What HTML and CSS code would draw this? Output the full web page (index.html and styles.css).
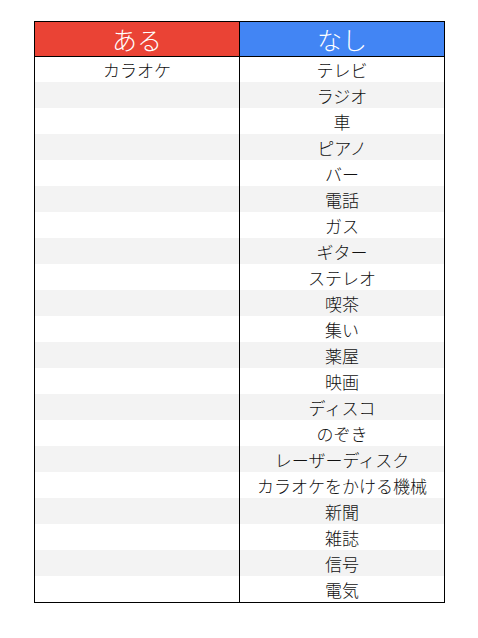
FILE: index.html
```html
<!DOCTYPE html>
<html lang="ja">
<head>
<meta charset="utf-8">
<link rel="stylesheet" href="styles.css">
</head>
<body>
<div class="sheet">
  <div class="head ari">ある</div>
  <div class="head nashi">なし</div>
  <div class="cell">カラオケ</div><div class="cell">テレビ</div>
  <div class="cell alt"></div><div class="cell alt">ラジオ</div>
  <div class="cell"></div><div class="cell">車</div>
  <div class="cell alt"></div><div class="cell alt">ピアノ</div>
  <div class="cell"></div><div class="cell">バー</div>
  <div class="cell alt"></div><div class="cell alt">電話</div>
  <div class="cell"></div><div class="cell">ガス</div>
  <div class="cell alt"></div><div class="cell alt">ギター</div>
  <div class="cell"></div><div class="cell">ステレオ</div>
  <div class="cell alt"></div><div class="cell alt">喫茶</div>
  <div class="cell"></div><div class="cell">集い</div>
  <div class="cell alt"></div><div class="cell alt">薬屋</div>
  <div class="cell"></div><div class="cell">映画</div>
  <div class="cell alt"></div><div class="cell alt">ディスコ</div>
  <div class="cell"></div><div class="cell">のぞき</div>
  <div class="cell alt"></div><div class="cell alt">レーザーディスク</div>
  <div class="cell"></div><div class="cell">カラオケをかける機械</div>
  <div class="cell alt"></div><div class="cell alt">新聞</div>
  <div class="cell"></div><div class="cell">雑誌</div>
  <div class="cell alt"></div><div class="cell alt">信号</div>
  <div class="cell"></div><div class="cell">電気</div>
</div>
</body>
</html>
```

FILE: styles.css
```css
html, body {
  margin: 0;
  padding: 0;
  background: #ffffff;
}
body {
  padding: 21px 0 0 34px;
  font-family: "Noto Sans CJK JP", "Noto Sans", sans-serif;
}
.sheet {
  display: grid;
  grid-template-columns: 204px 204px;
  grid-template-rows: 35px 25px repeat(20, 26px);
  column-gap: 1px;
  width: 409px;
  border: 1px solid #000;
  background: #000;
}
.head {
  display: flex;
  align-items: center;
  justify-content: center;
  box-sizing: border-box;
  border-bottom: 1px solid #000;
  color: #ffffff;
  font-size: 25px;
  font-weight: 300;
  line-height: 1;
}
.ari { background: #ea4335; }
.nashi { background: #4285f4; }
.cell {
  display: flex;
  align-items: center;
  justify-content: center;
  font-size: 17px;
  font-weight: 300;
  line-height: 1;
  color: #111;
  background: #fff;
  white-space: nowrap;
}
.alt { background: #f3f3f3; }
```
